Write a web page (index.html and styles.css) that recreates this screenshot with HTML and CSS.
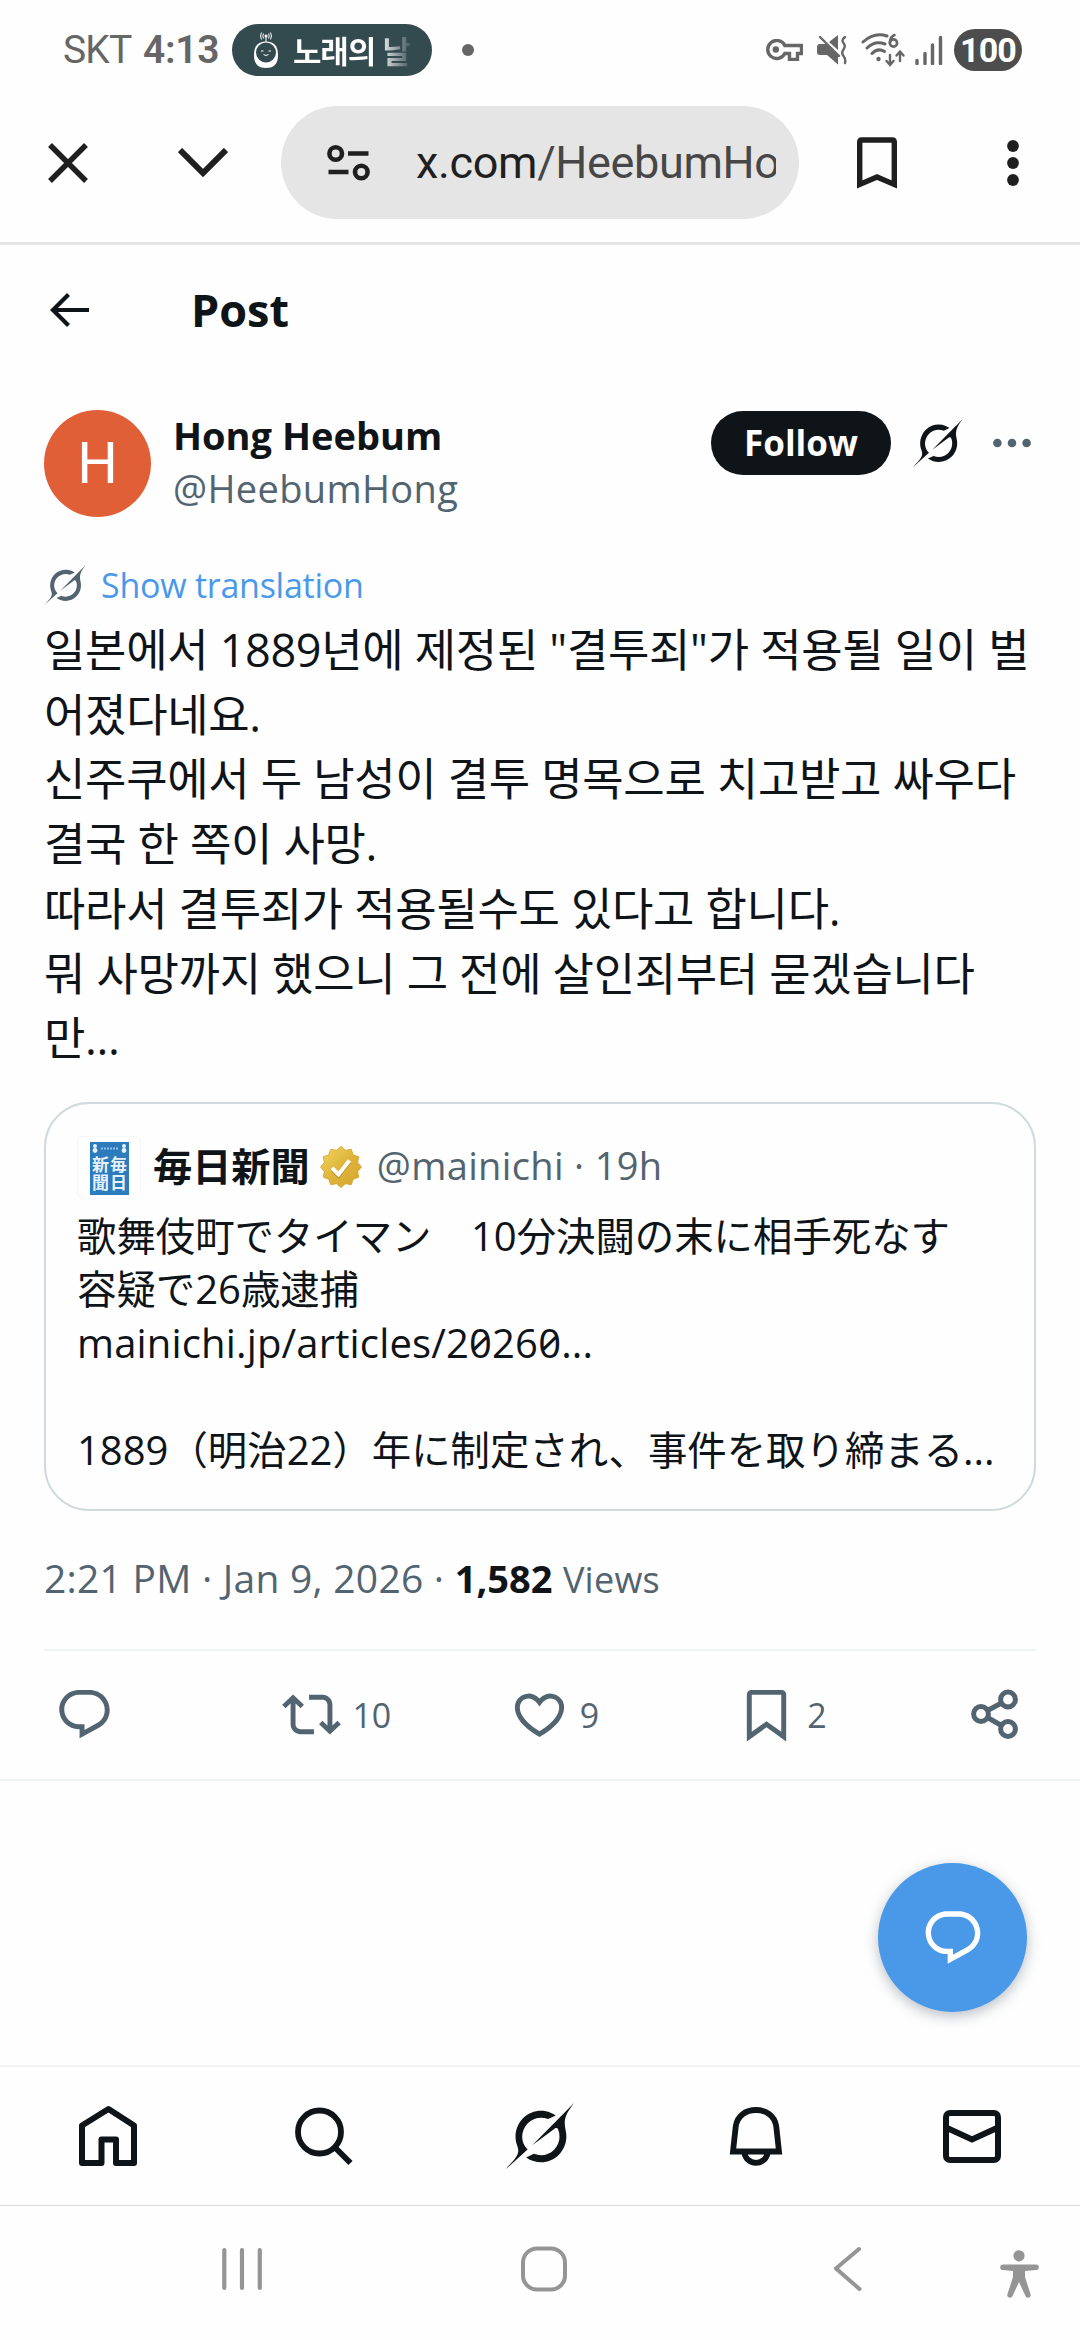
FILE: index.html
```html
<!DOCTYPE html>
<html lang="ko">
<head>
<meta charset="utf-8">
<title>Post</title>
<link rel="stylesheet" href="styles.css">
</head>
<body>
<svg class="defs" width="0" height="0" aria-hidden="true">
  <symbol id="grok" viewBox="0 0 33 32"><path d="M12.745 20.54l10.97-8.19c.539-.4 1.307-.244 1.564.38 1.349 3.288.746 7.241-1.938 9.955-2.683 2.714-6.417 3.31-9.83 1.954l-3.728 1.745c5.347 3.697 11.84 2.782 15.898-1.324 3.219-3.255 4.216-7.692 3.284-11.693l.008.009c-1.351-5.878.332-8.227 3.782-13.031L33 0l-4.54 4.59v-.014L12.743 20.544m-2.263 1.987c-3.837-3.707-3.175-9.446.1-12.755 2.42-2.449 6.388-3.448 9.852-1.979l3.72-1.737c-.67-.49-1.53-1.017-2.515-1.387-4.455-1.854-9.789-.931-13.41 2.728-3.483 3.523-4.579 8.94-2.697 13.561 1.405 3.454-.899 5.898-3.22 8.364C1.49 30.2.666 31.074 0 32l10.478-9.466"/></symbol>
  <symbol id="reply" viewBox="0 0 24 24"><path d="M1.751 10c0-4.42 3.584-8 8.005-8h4.366c4.49 0 8.129 3.64 8.129 8.13 0 2.96-1.607 5.68-4.196 7.11l-8.054 4.46v-3.69h-.067c-4.49.1-8.183-3.51-8.183-8.01zm8.005-6c-3.317 0-6.005 2.69-6.005 6 0 3.37 2.77 6.08 6.138 6.01l.351-.01h1.761v2.3l5.087-2.81c1.951-1.08 3.163-3.13 3.163-5.36 0-3.39-2.744-6.13-6.129-6.13H9.756z"/></symbol>
</svg>

<header class="status">
  <span class="carrier">SKT</span>
  <span class="clock">4:13</span>
  <div class="now-playing">
    <svg width="26" height="38" viewBox="0 0 26 38">
      <path d="M1 24C1 14 6 10.500 13 10.500S25 14 25 24 20 37 13 37 1 34 1 24z" fill="#fff"/>
      <circle cx="13" cy="21.500" r="10" fill="#334a4f"/>
      <circle cx="13" cy="5" r="1.500" fill="#fff"/>
      <path d="M13 5v6M10.500 2.500q-1.500 2.500 0 5M15.500 2.500q1.500 2.500 0 5M8.500 1.500q-2 3.500 0 7M17.500 1.500q2 3.500 0 7M8 20h2.500M15.500 20h2.500M10.500 23.500q2.500 2 5 0" fill="none" stroke="#fff"/>
    </svg>
    <span class="song">노래의 날</span>
  </div>
  <i class="more-dot"></i>
  <div class="indicators">
    <svg class="key" width="38" height="22" viewBox="0 0 38 22"><path d="M36.500 6.500H19.800A9 9 0 1 0 19.800 14.500H24.500V20.500H32.500V14.500H36.500z" fill="none" stroke="#666" stroke-width="3.400"/><circle cx="10.800" cy="10.500" r="3.200" fill="#666"/></svg>
    <svg class="mute" width="30" height="30" viewBox="0 0 30 30"><path d="M0 12q0-3 3-3h6l12 12v8.500L10 20H3q-3 0-3-3zM12 7l9-7v15z" fill="#666"/><path d="M3 2l19 19M28 2q-4 3-1.500 6t0 6.500 0 6.500 1.500 7" fill="none" stroke="#666" stroke-width="2.400" stroke-linecap="round"/></svg>
    <svg class="wifi" width="45" height="34" viewBox="0 0 45 34"><g fill="none" stroke="#666" stroke-width="3" stroke-linecap="round"><path d="M2 9Q13-1 26 3M6 15Q14 7 24 11M11 20.500Q17 14.500 23.500 18.500"/><path d="M29 22v9M25.500 28l3.500 4 3.500-4M39 28v-9M35.500 22.500l3.500-4 3.500 4" stroke-width="2.400"/><path d="M33.500 2Q29 4 28.800 9.500" stroke-width="2.600"/><circle cx="32.500" cy="10" r="3.600" stroke-width="2.600"/></g><circle cx="17.500" cy="26" r="2.200" fill="#666"/></svg>
    <svg class="signal" width="28" height="30" viewBox="0 0 28 30"><path d="M2 25.500v3M10 18.500v10M17.500 10v18.500M25.500 2.500v26" stroke="#666" stroke-width="3.400" stroke-linecap="round"/></svg>
    <span class="battery">100</span>
  </div>
</header>

<div class="browser-bar">
  <svg class="close" width="40" height="40" viewBox="0 0 40 40"><path d="M2 2l36 36M38 2L2 38" stroke="#1f1f1f" stroke-width="5.400"/></svg>
  <svg class="collapse" width="50" height="30" viewBox="0 0 50 30"><path d="M2 2l23 23L48 2" fill="none" stroke="#1f1f1f" stroke-width="6"/></svg>
  <div class="url">
    <svg width="43" height="38" viewBox="0 0 43 38"><g fill="none" stroke="#1f1f1f" stroke-width="4.600"><circle cx="8.700" cy="9.500" r="6.300"/><circle cx="34.300" cy="28" r="6.300"/><path d="M21 9.500h20.500M1.500 28h20"/></g></svg>
    <span class="address">x.com<span class="path">/HeebumHo</span></span>
  </div>
  <svg class="save" width="40" height="52" viewBox="0 0 40 52"><path d="M2.700 47.500V5q0-2 2-2h30.600q2 0 2 2v42.500L20 40z" fill="none" stroke="#1f1f1f" stroke-width="5.400"/></svg>
  <svg class="menu" width="12" height="46" viewBox="0 0 12 46" fill="#1f1f1f"><circle cx="6" cy="6" r="5.900"/><circle cx="6" cy="23" r="5.900"/><circle cx="6" cy="40" r="5.900"/></svg>
</div>

<div class="page-head">
  <svg width="39" height="34" viewBox="0 0 39 34"><path d="M39 17H4M18.500 1.500L3 17l15.500 15.500" fill="none" stroke="#0f1419" stroke-width="4.200"/></svg>
  <h1>Post</h1>
</div>

<main class="post">
  <div class="author">
    <div class="avatar">H</div>
    <div class="who">
      <div class="name">Hong Heebum</div>
      <div class="handle">@HeebumHong</div>
    </div>
    <div class="author-actions">
      <button class="follow">Follow</button>
      <svg class="ink" width="50" height="48"><use href="#grok"/></svg>
      <svg class="dots" width="38" height="10" viewBox="0 0 38 10"><circle cx="4.400" cy="5" r="4.300"/><circle cx="19" cy="5" r="4.300"/><circle cx="33.600" cy="5" r="4.300"/></svg>
    </div>
  </div>
  <div class="translate"><svg width="42" height="40"><use href="#grok"/></svg><span>Show translation</span></div>
  <p class="body">일본에서 1889년에 제정된 "결투죄"가 적용될 일이 벌<br>어졌다네요.<br>신주쿠에서 두 남성이 결투 명목으로 치고받고 싸우다<br>결국 한 쪽이 사망.<br>따라서 결투죄가 적용될수도 있다고 합니다.<br>뭐 사망까지 했으니 그 전에 살인죄부터 묻겠습니다<br>만...</p>

  <article class="quote" lang="ja">
    <div class="quote-head">
      <div class="paper"><div class="crest"><svg width="39" height="14" viewBox="0 0 39 14"><g fill="#e6f1fa"><circle cx="5" cy="4" r="2"/><circle cx="5" cy="8.500" r="2.400"/><circle cx="34" cy="4" r="2"/><circle cx="34" cy="8.500" r="2.400"/></g><path d="M11 6.500h17" stroke="#8fc0e4" stroke-width="2" stroke-dasharray="2 1"/></svg><div class="paper-name">毎日新聞</div></div></div>
      <b class="quote-name">毎日新聞</b>
      <svg class="badge" width="42" height="42" viewBox="0 0 42 42">
        <defs><linearGradient id="gold" x1="0" y1="0" x2="1" y2="1"><stop offset="0" stop-color="#f3d863"/><stop offset=".5" stop-color="#dfb43a"/><stop offset="1" stop-color="#d4a52f"/></linearGradient></defs>
        <path d="M21 .5l4.500 3.800 5.750-1.050 1.950 5.550 5.550 1.950-1.050 5.750L41.500 21l-3.800 4.500 1.050 5.750-5.550 1.950-1.950 5.550-5.750-1.050L21 41.500l-4.500-3.800-5.750 1.050-1.950-5.550-5.550-1.950 1.050-5.750L.5 21l3.800-4.500-1.050-5.750 5.550-1.950 1.950-5.550 5.750 1.050z" fill="url(#gold)" stroke="#d3a02a" stroke-width=".8"/>
        <path d="M12 23.500l6.500 6.500 11-14" fill="none" stroke="#b9821b" stroke-width="3.600"/>
        <path d="M12 22l6.500 6.500 11-14" fill="none" stroke="#fff" stroke-width="4"/>
      </svg>
      <span class="quote-meta">@mainichi · 19h</span>
    </div>
    <p class="quote-body">歌舞伎町でタイマン　<span class="num">10</span>分決闘の末に相手死なす<br>容疑で<span class="num">26</span>歳逮捕<br><span class="link">mainichi.jp/articles/20260...</span><br><br><span class="num">1889</span>（明治<span class="num">22</span>）年に制定され、事件を取り締まる<span class="num">...</span></p>
  </article>

  <div class="meta">2:21 PM · Jan 9, 2026 · <b>1,582</b> <span class="views">Views</span></div>

  <div class="actions">
    <div class="action"><svg width="59" height="59"><use href="#reply"/></svg></div>
    <div class="action"><svg width="59" height="59" viewBox="0 0 24 24"><path d="M4.500 3.880l4.432 4.140-1.364 1.460L5.500 7.550V16c0 1.100.896 2 2 2H13v2H7.500c-2.209 0-4-1.790-4-4V7.550L1.432 9.480.068 8.020 4.500 3.880zM16.500 6H11V4h5.500c2.209 0 4 1.790 4 4v8.450l2.068-1.930 1.364 1.460-4.432 4.140-4.432-4.140 1.364-1.460 2.068 1.930V8c0-1.100-.896-2-2-2z"/></svg><span>10</span></div>
    <div class="action"><svg width="59" height="59" viewBox="0 0 24 24"><path d="M16.697 5.500c-1.222-.06-2.679.51-3.890 2.160l-.805 1.090-.806-1.090C9.984 6.010 8.526 5.440 7.304 5.500c-1.243.07-2.349.78-2.910 1.910-.552 1.120-.633 2.780.479 4.820 1.074 1.970 3.257 4.270 7.129 6.610 3.870-2.340 6.052-4.640 7.126-6.610 1.111-2.040 1.030-3.700.477-4.820-.561-1.130-1.666-1.840-2.908-1.910zm4.187 7.690c-1.351 2.480-4.001 5.120-8.379 7.670l-.503.3-.504-.3c-4.379-2.550-7.029-5.190-8.382-7.670-1.360-2.500-1.410-4.860-.514-6.670.887-1.790 2.647-2.910 4.601-3.010 1.651-.09 3.368.56 4.798 2.010 1.429-1.450 3.146-2.100 4.796-2.010 1.954.1 3.714 1.220 4.601 3.010.896 1.810.846 4.170-.514 6.670z"/></svg><span>9</span></div>
    <div class="action"><svg width="59" height="59" viewBox="0 0 24 24"><path d="M4 3.800C4 2.800 4.800 2 5.800 2h12.400c1 0 1.800.8 1.800 1.800v19.140l-8-5.710-8 5.710V3.800zM6 4v15.060l6-4.290 6 4.290V4z"/></svg><span>2</span></div>
    <div class="action"><svg width="59" height="59" viewBox="0 0 59 59"><g fill="none" stroke="#536471" stroke-width="5"><circle cx="16" cy="29" r="7.400"/><circle cx="43" cy="14.500" r="7.400"/><circle cx="43" cy="44" r="7.400"/><path d="M22.500 25.500l14-7.500M22.500 32.500l14 8"/></g></svg></div>
  </div>
</main>

<div class="rest">
  <button class="fab"><svg width="64" height="64"><use href="#reply"/></svg></button>
</div>

<nav class="tabs">
  <svg width="60" height="62" viewBox="0 0 60 62"><path d="M30.500 4L56 20.500V58H38V34.500H23.500V58H4V20.500z" fill="none" stroke="#0f1419" stroke-width="6" stroke-linejoin="round"/></svg>
  <svg width="60" height="60" viewBox="0 0 60 60"><g fill="none" stroke="#0f1419" stroke-width="5.800"><circle cx="25.500" cy="26" r="21.500"/><path d="M41 41.500l15.500 15.500"/></g></svg>
  <svg class="ink" width="68" height="66"><use href="#grok"/></svg>
  <svg width="54" height="60" viewBox="0 0 54 60"><g fill="none" stroke="#0f1419" stroke-width="5.800"><path d="M4 45.500L6.800 20C8.500 9.500 17 4 27 4s18.500 5.500 20.200 16L50 45.500z"/><path d="M15.500 46a11.500 10.800 0 0 0 23 0"/></g></svg>
  <svg width="60" height="56" viewBox="0 0 60 56"><g fill="none" stroke="#0f1419" stroke-width="6"><rect x="4" y="5" width="52" height="47" rx="4"/><path d="M4 19.500l26 12 26-12"/></g></svg>
</nav>

<footer class="system">
  <svg class="recents" width="40" height="44" viewBox="0 0 40 44"><path d="M2.300 3v38M20 3v38M37.800 3v38" stroke="#959595" stroke-width="4.200" stroke-linecap="round"/></svg>
  <svg class="home" width="46" height="46" viewBox="0 0 46 46"><rect x="2" y="2.500" width="42" height="41" rx="14" fill="none" stroke="#959595" stroke-width="4"/></svg>
  <svg class="back" width="29" height="46" viewBox="0 0 29 46"><path d="M26 3L3 22.500 26.500 43" fill="none" stroke="#959595" stroke-width="4" stroke-linecap="round" stroke-linejoin="round"/></svg>
  <svg class="access" width="39" height="48" viewBox="0 0 39 48" fill="#959595"><circle cx="19" cy="5.800" r="5.600"/><path d="M3 14.500h33a2.600 2.600 0 0 1 0 5.600L25 21v6l5.500 17a2.600 2.600 0 0 1-5 2L19 32l-6.500 14a2.600 2.600 0 0 1-5-2L13 27v-6L3 20.100a2.600 2.600 0 0 1 0-5.600z"/></svg>
</footer>
</body>
</html>
```
FILE: styles.css
```css
* { box-sizing: border-box; }
body {
  margin: 0;
  width: 1080px;
  height: 2340px;
  display: flex;
  flex-direction: column;
  background: #fefefe;
  color: #0f1419;
  font-family: "Open Sans", "Noto Sans CJK KR", sans-serif;
  overflow: hidden;
}
svg { display: block; flex: none; }
.defs { position: absolute; }
p, h1 { margin: 0; }
button { border: 0; padding: 0; font: inherit; }
.ink { fill: #0f1419; }

.status {
  height: 100px;
  padding: 0 58px 0 63px;
  display: flex;
  align-items: center;
  color: #666;
  font: 39px/46px Roboto, sans-serif;
  white-space: nowrap;
}
.carrier { width: 80px; letter-spacing: -0.8px; }
.clock { width: 89px; font-weight: 600; letter-spacing: -0.3px; }
.now-playing {
  width: 200px;
  height: 52px;
  padding-left: 21px;
  display: flex;
  align-items: center;
  gap: 14px;
  border-radius: 26px;
  background: #334a4f;
}
.song {
  width: 118px;
  overflow: hidden;
  font: bold 31px/44px "Noto Sans CJK KR", sans-serif;
  letter-spacing: -1.200px;
  color: transparent;
  background: linear-gradient(90deg, #fff 72%, #334a4f 102%);
  background-clip: text;
}
.more-dot { width: 12px; height: 12px; margin-left: 30px; border-radius: 50%; background: #666; }
.indicators { margin-left: auto; display: flex; align-items: center; }
.mute { margin-left: 14px; }
.wifi { margin-left: 14px; }
.signal { margin-left: 9px; }
.battery {
  width: 68px;
  height: 42px;
  margin-left: 11px;
  border-radius: 21px;
  background: #4d4d4d;
  color: #fff;
  text-align: center;
  font: bold 34px/43px Roboto, sans-serif;
  letter-spacing: -0.8px;
}

.browser-bar {
  height: 145px;
  padding: 0 61px 17px 48px;
  display: flex;
  align-items: center;
  border-bottom: 3px solid #e5e5e5;
}
.collapse { margin-left: 90px; }
.url {
  width: 518px;
  height: 113px;
  margin-left: 53px;
  padding-left: 46px;
  display: flex;
  align-items: center;
  gap: 46px;
  border-radius: 57px;
  background: #e5e5e5;
}
.address {
  width: 360px;
  overflow: hidden;
  white-space: nowrap;
  font: 45px/60px Roboto, sans-serif;
  letter-spacing: -0.350px;
  color: #1f1f1f;
}
.path { color: #474747; }
.save { margin-left: 58px; }
.menu { margin-left: 110px; }

.page-head {
  height: 130px;
  padding-left: 50px;
  display: flex;
  align-items: center;
  gap: 102px;
}
h1 { font-size: 45px; line-height: 60px; font-weight: 700; }

.post { padding: 35px 44px 0; border-bottom: 2px solid #eff3f4; }
.author { height: 107px; display: flex; align-items: flex-start; }
.avatar {
  width: 107px;
  height: 107px;
  border-radius: 50%;
  background: #e15f36;
  color: #fff;
  text-align: center;
  font: 57px/107px Roboto, sans-serif;
}
.who { margin: -1px 0 0 22px; font-size: 38px; line-height: 53px; white-space: nowrap; }
.name { font-weight: 700; }
.handle { color: #536471; letter-spacing: 0.350px; }
.author-actions { margin-left: auto; padding: 1px 5px 0 0; display: flex; align-items: center; }
.follow {
  width: 180px;
  height: 64px;
  border-radius: 32px;
  background: #0f1419;
  color: #fff;
  font-size: 35px;
  font-weight: 700;
  line-height: 62px;
}
.author-actions .ink { margin-left: 22px; }
.dots { margin-left: 30px; fill: #536471; }

.translate {
  height: 46px;
  margin-top: 45px;
  display: flex;
  align-items: center;
  gap: 15px;
  color: #4a99e9;
  font-size: 34px;
  line-height: 46px;
  letter-spacing: -0.250px;
}
.translate svg { fill: #536471; }
.body { margin-top: 10px; font-size: 45px; line-height: 64.7px; letter-spacing: -0.330px; white-space: nowrap; }

.quote {
  height: 409px;
  margin-top: 31px;
  padding: 32px 31px;
  border: 2px solid #cfd9de;
  border-radius: 45px;
  white-space: nowrap;
}
.quote-head { height: 63px; display: flex; align-items: center; }
.paper {
  width: 64px;
  height: 63px;
  padding: 5px 12px;
  border: 1px solid #f6f6f6;
  border-radius: 6px;
}
.crest { width: 39px; height: 53px; background: #2b7bbd; }
.paper-name {
  height: 38px;
  width: 36px;
  margin-left: 1px;
  writing-mode: vertical-rl;
  white-space: normal;
  word-break: break-all;
  font: bold 17px/18px "Noto Sans CJK JP", sans-serif;
  letter-spacing: 1px;
  color: #e6f1fa;
}
.quote-name { margin: -6px 0 0 12px; font: bold 39.200px/53px "Noto Sans CJK JP", sans-serif; }
.badge { margin-left: 10px; }
.quote-meta { margin: -4px 0 0 15px; font-size: 38px; line-height: 53px; letter-spacing: 0.350px; color: #536471; }
.quote-body { margin-top: 8px; font: 39.400px/53.400px "Noto Sans CJK JP", sans-serif; }
.num, .link { font-family: "Open Sans", sans-serif; font-size: 40px; line-height: 0; }
.link { letter-spacing: 0.150px; font-feature-settings: "zero"; }

.meta { margin-top: 40px; height: 98px; font-size: 39px; line-height: 53px; letter-spacing: 0.250px; color: #536471; white-space: pre; }
.meta b { color: #0f1419; font-size: 38px; letter-spacing: 0; }
.views { font-size: 36px; }

.actions {
  height: 130px;
  padding-left: 11px;
  display: grid;
  grid-template-columns: repeat(4, 227.400px) auto;
  align-items: center;
  border-top: 2px solid #eff3f4;
}
.action { display: flex; align-items: center; gap: 11px; color: #536471; fill: #536471; font-size: 34px; line-height: 46px; }

.rest { flex: 1; position: relative; }
.fab {
  position: absolute;
  right: 53px;
  bottom: 53px;
  width: 149px;
  height: 149px;
  display: grid;
  place-items: center;
  border-radius: 50%;
  background: #4a99e9;
  fill: #fff;
  box-shadow: 0 4px 14px rgba(80, 95, 110, .4);
}

.tabs {
  height: 140px;
  display: grid;
  grid-template-columns: repeat(5, 1fr);
  place-items: center;
  border-top: 2px solid #f2f2f2;
}
.system {
  height: 135px;
  padding: 40px 0 0 222px;
  display: flex;
  border-top: 1px solid #dcdcdc;
}
.recents { margin-top: 1px; }
.home { margin-left: 259px; }
.back { margin-left: 266px; }
.access { margin: 4px 0 0 138px; }
```
